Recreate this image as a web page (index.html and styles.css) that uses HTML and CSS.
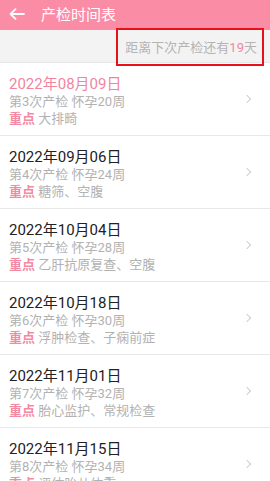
FILE: index.html
```html
<!DOCTYPE html>
<html lang="zh">

<head>
    <meta charset="UTF-8">
    <meta name="viewport" content="width=device-width, initial-scale=1.0">
    <title>产检时间表</title>
    <link rel="stylesheet" href="styles.css">
</head>

<body>
    <!-- Top bar -->
    <div class="topbar">
        <svg class="back" width="16" height="12" viewBox="0 0 16 12">
            <path d="M15 6H2M6.5 1.2L1.6 6l4.9 4.8" fill="none" stroke="#fff" stroke-width="1.8" stroke-linecap="round" stroke-linejoin="round"/>
        </svg>
        <span class="title">产检时间表</span>
    </div>

    <!-- Countdown bar -->
    <div class="countdown">
        <span>距离下次产检还有<em>19</em>天</span>
        <div class="mark"></div>
    </div>

    <!-- Checkup list -->
    <ul class="list">
        <li class="item current">
            <div class="date">2022年08月09日</div>
            <div class="info">第3次产检 怀孕20周</div>
            <div class="key"><b>重点</b> 大排畸</div>
        </li>
        <li class="item">
            <div class="date">2022年09月06日</div>
            <div class="info">第4次产检 怀孕24周</div>
            <div class="key"><b>重点</b> 糖筛、空腹</div>
        </li>
        <li class="item">
            <div class="date">2022年10月04日</div>
            <div class="info">第5次产检 怀孕28周</div>
            <div class="key"><b>重点</b> 乙肝抗原复查、空腹</div>
        </li>
        <li class="item">
            <div class="date">2022年10月18日</div>
            <div class="info">第6次产检 怀孕30周</div>
            <div class="key"><b>重点</b> 浮肿检查、子痫前症</div>
        </li>
        <li class="item">
            <div class="date">2022年11月01日</div>
            <div class="info">第7次产检 怀孕32周</div>
            <div class="key"><b>重点</b> 胎心监护、常规检查</div>
        </li>
        <li class="item">
            <div class="date">2022年11月15日</div>
            <div class="info">第8次产检 怀孕34周</div>
            <div class="key"><b>重点</b> 评估胎儿体重</div>
        </li>
    </ul>
</body>

</html>
```

FILE: styles.css
```css
body {
    margin: 0;
    font-family: Roboto, "Noto Sans CJK SC", sans-serif;
    background: #fff;
    overflow: hidden;
}

.topbar {
    height: 30px;
    background-color: #fb8ca6;
    display: flex;
    align-items: center;
}

.back {
    margin-left: 9px;
    margin-top: -3px;
}

.title {
    margin-left: 16px;
    margin-top: -3px;
    font-size: 15px;
    color: #fff;
}

.countdown {
    position: relative;
    height: 32px;
    background-color: #f3f3f3;
    border-bottom: 1px solid #e6e6e6;
    display: flex;
    align-items: center;
    justify-content: flex-end;
    padding-right: 13px;
    font-size: 13px;
    color: #b4b4b4;
}

.countdown em {
    font-style: normal;
    color: #f4879f;
}

/* red annotation box */
.mark {
    position: absolute;
    top: -2px;
    left: 116px;
    right: 6px;
    bottom: -4px;
    border: 2px solid #e8101a;
}

.list {
    list-style: none;
    margin: 0;
    padding: 0;
}

.item {
    position: relative;
    padding: 13px 0 8px 9px;
    border-bottom: 1px solid #e8e8e8;
}

/* chevron */
.item::after {
    content: "";
    position: absolute;
    right: 20px;
    top: 50%;
    width: 5px;
    height: 5px;
    margin-top: -3px;
    border-top: 1px solid #cfcfcf;
    border-right: 1px solid #cfcfcf;
    transform: rotate(45deg);
}

.date {
    font-size: 15px;
    line-height: 17px;
    color: #222;
}

.current .date {
    color: #f1859f;
}

.info,
.key {
    font-size: 13px;
    line-height: 17px;
    color: #b2b2b2;
}

.key b {
    font-weight: bold;
    color: #f38aa3;
}
```
